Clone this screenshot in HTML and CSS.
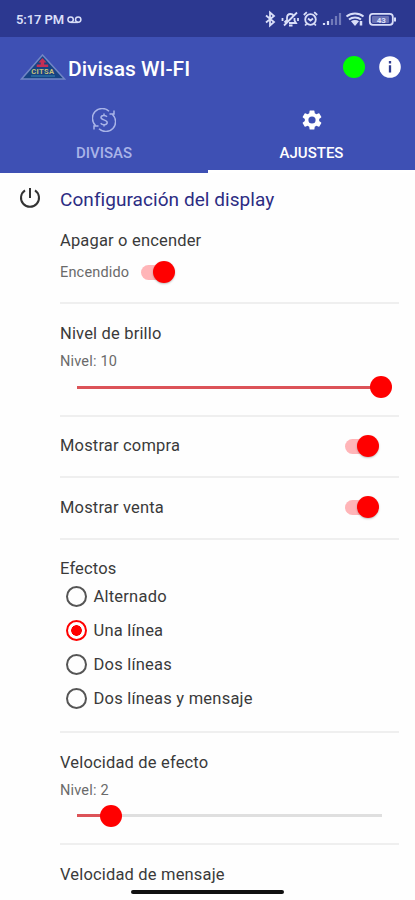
FILE: index.html
```html
<!DOCTYPE html>
<html lang="es">
<head>
<meta charset="utf-8">
<title>Divisas WI-FI</title>
<link rel="stylesheet" href="styles.css">
</head>
<body>
<div class="screen">
  <div class="status">
    <span class="clock">5:17 PM</span>
    <svg class="voicemail" width="15" height="8" viewBox="0 0 15 8" fill="none" stroke="currentColor" stroke-width="1.5"><circle cx="3.6" cy="3.6" r="2.7"/><circle cx="11.2" cy="3.6" r="2.7"/><path d="M3.6 6.4h7.6"/></svg>
    <svg class="system" width="134" height="18" viewBox="0 0 134 18" fill="none" stroke="currentColor" stroke-width="1.8">
      <path d="M2 5.500l8 6.500-4 3.500V2.500l4 3.500L2 12.500"/>
      <g stroke-width="1.800"><path d="M20.500 12.500L23 10V8c0-3 1.500-4 3.500-4 1.500 0 2.500.5 3 1.500M25 13h7l-1.500-2.500V8M25 15.500h3.500M33 2.500L20 15.500M18.500 8v3M34 8v3"/></g>
      <circle cx="46.500" cy="9.500" r="5.300"/><path d="M44 8.500l2.500 2 2.500-2M39.800 5l3-2.800M53.200 5l-3-2.800M42.500 14l-1.400 1.500M50.500 14l1.400 1.500"/>
      <g stroke-width="2.200"><path d="M60 15v-2M64 15v-4"/><path opacity=".4" d="M68 15V9M72 15V6M76 15V3"/></g>
      <path d="M82.500 6.500c5-4 12-4 17 0M85 9.500c3.500-2.800 8.500-2.800 12 0" stroke-width="2"/><path d="M87 11.200L91 16l4-4.800c-2.500-1.700-5.500-1.700-8 0z" fill="currentColor" stroke="none"/><path d="M97 11v4.500" stroke-width="2.500"/>
      <rect x="105.800" y="3.800" width="23" height="11" rx="3"/><rect x="108" y="6" width="17" height="7" rx="1" fill="currentColor" fill-opacity=".35" stroke="none"/><path d="M131 7.500v4" stroke-width="2"/>
      <text class="battery" x="117.300" y="12.500" text-anchor="middle">43</text>
    </svg>
  </div>

  <header class="appbar">
    <svg class="logo" width="46" height="27" viewBox="0 0 46 27">
      <path d="M22.500 1L1.500 25h43z" fill="#174383" stroke="#7186c5" stroke-width="1.500"/>
      <path d="M22.500 4l4 4.500h-2.300V10.500h4v2.500h-11.500v-2.500h4V8.500h-2.300z" fill="#c42f55"/>
      <text class="logotext" x="22.800" y="20" text-anchor="middle">CITSA</text>
      <path d="M11 22h24" stroke="#2b6fa2" stroke-width="1.500"/>
    </svg>
    <h1>Divisas WI-FI</h1>
    <span class="online"></span>
    <svg class="info" width="22" height="22" viewBox="0 0 22 22"><circle cx="11" cy="11" r="10.800" fill="#fff"/><path d="M11 5v2.400M11 9.300V16.500" stroke="#303d92" stroke-width="2.300"/></svg>
  </header>

  <nav class="tabs">
    <div class="tab">
      <svg width="24" height="24" viewBox="0 0 24 24" fill="none" stroke="currentColor" stroke-width="1.500"><path d="M17 3.200A9.800 9.800 0 0 0 3.500 17.500M7 20.800A9.800 9.800 0 0 0 20.500 6.500M17.500 6h4.500V2.500M6.500 18H2v3.500"/><path d="M15 8.800C13.500 6.800 9 7 9 9.500c0 3 6.200 1.700 6.200 5 0 2.700-4.900 2.900-6.500.7M12 5.500v2M12 16.500v2"/></svg>
      <span>DIVISAS</span>
    </div>
    <div class="tab active">
      <svg width="26" height="26" viewBox="0 0 24 24" fill="currentColor"><path d="M19.140 12.940c.04-.3.060-.61.060-.94s-.02-.64-.07-.94l2.030-1.580a.49.49 0 0 0 .12-.61l-1.920-3.320a.488.488 0 0 0-.59-.22l-2.390.96a7.020 7.020 0 0 0-1.620-.94l-.36-2.540a.484.484 0 0 0-.48-.41h-3.840a.48.48 0 0 0-.47.41l-.36 2.540c-.59.24-1.130.57-1.620.94l-2.390-.96a.48.48 0 0 0-.59.220L2.740 8.870a.48.48 0 0 0 .12.610l2.030 1.580c-.05.3-.09.63-.09.940s.02.640.07.940l-2.030 1.580a.49.49 0 0 0-.12.610l1.920 3.320c.12.220.37.290.59.220l2.390-.96c.5.380 1.030.7 1.620.940l.36 2.540c.05.240.24.410.48.410h3.840c.24 0 .44-.17.470-.41l.36-2.540c.59-.24 1.130-.56 1.620-.94l2.390.96c.22.080.47 0 .59-.22l1.920-3.320a.48.48 0 0 0-.12-.61zM12 15.600a3.600 3.600 0 1 1 0-7.200 3.600 3.600 0 0 1 0 7.200z"/></svg>
      <span>AJUSTES</span>
    </div>
  </nav>

  <main>
    <div class="heading">
      <svg width="22" height="22" viewBox="0 0 22 22" fill="none" stroke="#333" stroke-width="2"><path d="M11 1v10M6 3.300a9 9 0 1 0 10 0"/></svg>
      <h2>Configuración del display</h2>
    </div>
    <section class="power">
      <h3>Apagar o encender</h3>
      <div class="inline"><span class="sub">Encendido</span><span class="switch"></span></div>
    </section>
    <section class="range">
      <h3>Nivel de brillo</h3>
      <p class="sub">Nivel: 10</p>
      <div class="slider"><div class="fill" style="width:99.700%"></div></div>
    </section>
    <section class="toggle"><h3>Mostrar compra</h3><span class="switch"></span></section>
    <section class="toggle"><h3>Mostrar venta</h3><span class="switch"></span></section>
    <section class="effects">
      <h3>Efectos</h3>
      <div class="option"><i></i><span>Alternado</span></div>
      <div class="option checked"><i></i><span>Una línea</span></div>
      <div class="option"><i></i><span>Dos líneas</span></div>
      <div class="option"><i></i><span>Dos líneas y mensaje</span></div>
    </section>
    <section class="range">
      <h3>Velocidad de efecto</h3>
      <p class="sub">Nivel: 2</p>
      <div class="slider"><div class="fill" style="width:11%"></div></div>
    </section>
    <section class="message"><h3>Velocidad de mensaje</h3></section>
  </main>
  <div class="home"></div>
</div>
</body>
</html>
```

FILE: styles.css
```css
* { box-sizing: border-box; }
body { margin: 0; font-family: Roboto, "Liberation Sans", sans-serif; background: #fefefe; color: #3a3a3a; }
h1, h2, h3, p { margin: 0; font-weight: 400; white-space: nowrap; }
svg { flex: none; display: block; }
.screen { position: relative; width: 415px; height: 900px; overflow: hidden; }

.status { display: flex; align-items: center; height: 37px; padding: 2px 17px 0 16px; background: #2c3890; color: #d9def8; }
.clock { font-size: 13px; font-weight: 600; letter-spacing: -.1px; }
.voicemail { margin-left: 3px; }
.system { margin: -2px 0 0 auto; }
.battery { font-size: 8px; font-weight: 700; fill: currentColor; stroke: none; }

.appbar { display: flex; align-items: center; height: 63px; padding: 0 14px 0 20px; background: #3e50b4; }
.logo { margin-top: -2px; }
.logotext { font-size: 7.500px; font-weight: 700; letter-spacing: .4px; fill: #c5c07b; }
.appbar h1 { margin-left: 2px; font-size: 21px; font-weight: 500; color: #fff; }
.online { width: 22px; height: 22px; margin: -3px 14px 0 auto; border-radius: 50%; background: #0f0; }
.info { margin-top: -3px; }

.tabs { display: grid; grid-template-columns: 208px 207px; height: 73px; background: #3e50b4; }
.tab { display: flex; flex-direction: column; align-items: center; padding-top: 8px; color: #a9b4e8; }
.tab svg { height: 24px; }
.tab span { margin-top: 12px; font-size: 15px; font-weight: 500; line-height: 18px; }
.active { color: #fff; border-bottom: 3px solid #fff; }

.heading { display: flex; align-items: center; height: 53px; padding: 0 0 0 19px; }
.heading svg { margin-top: -3px; }
.heading h2 { margin-left: 19px; font-size: 19px; letter-spacing: .06px; color: #2c2c83; }

section { margin: 0 16px 0 60px; border-bottom: 2px solid #efefef; }
h3 { font-size: 16.500px; line-height: 24px; letter-spacing: .17px; }
.sub { font-size: 14.500px; line-height: 20px; letter-spacing: .18px; color: #6a6a6a; }

.power { height: 78px; padding-top: 3px; }
.inline { display: flex; align-items: center; height: 24px; margin-top: 7px; }
.inline .sub { margin-top: 2px; }
.inline .switch { margin-left: 12px; }
.switch { position: relative; width: 29px; height: 15px; border-radius: 8px; background: #ffb5b8; }
.switch::after { content: ""; position: absolute; right: -5px; top: -4px; width: 22px; height: 22px; border-radius: 50%; background: #f00; box-shadow: 0 1px 2px rgba(0, 0, 0, .25); }

.range { height: 112.500px; padding-top: 18px; }
.range .sub { margin-top: 6px; }
.slider { height: 3px; margin: 13.500px 17px 0; background: #dfdfdf; }
.fill { position: relative; height: 3px; background: #dc5358; }
.fill::after { content: ""; position: absolute; right: -11px; top: -9.500px; width: 22px; height: 22px; border-radius: 50%; background: #f00; }

.toggle { display: flex; align-items: center; justify-content: space-between; height: 61.500px; }
.toggle .switch { margin-right: 25.500px; }

.effects { height: 193px; padding-top: 17.500px; }
.effects h3 { margin-bottom: -1px; }
.option { display: flex; align-items: center; height: 33.800px; padding-left: 6px; font-size: 16.500px; letter-spacing: .22px; }
.option i { width: 21px; height: 21px; margin-right: 6.500px; border: 2px solid #555; border-radius: 50%; }
.checked i { border-color: #f00; background: radial-gradient(circle, #f00 5px, transparent 5.600px); }

.message { border: 0; padding-top: 17.500px; }
.home { position: absolute; left: 131px; top: 890px; width: 153px; height: 4px; border-radius: 2px; background: #101010; }
```
